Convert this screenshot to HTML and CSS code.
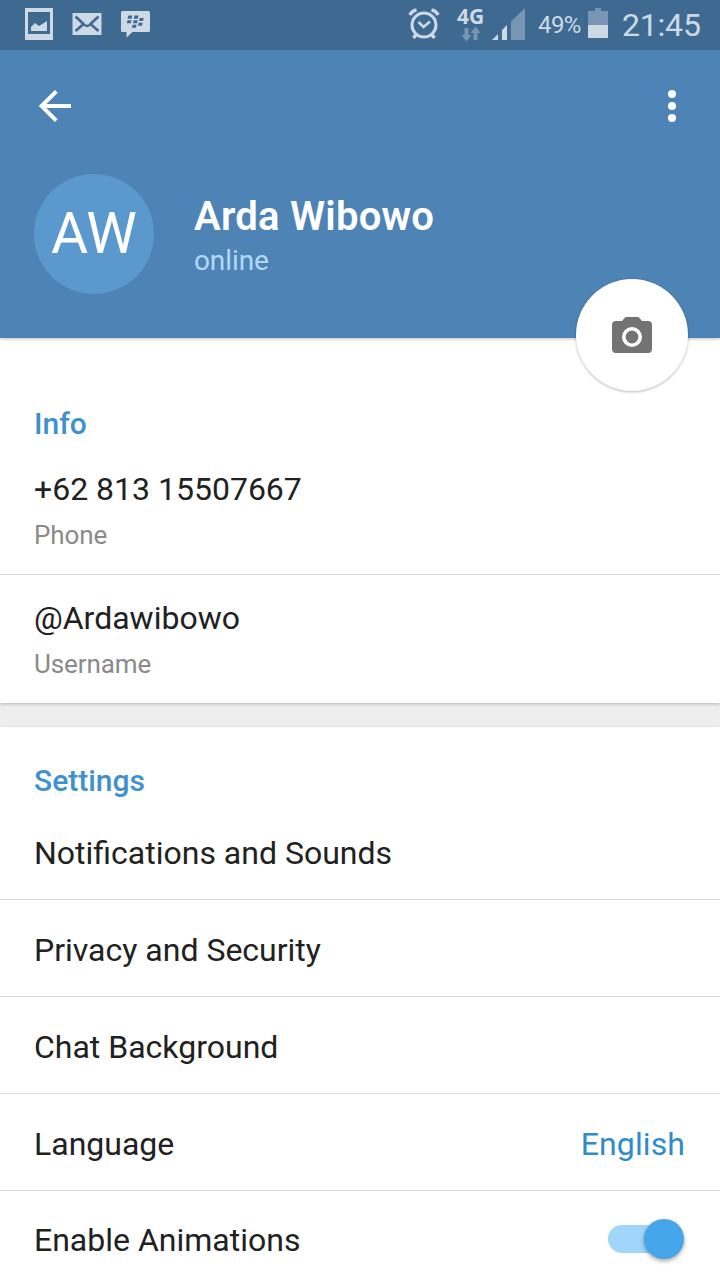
FILE: index.html
```
<!DOCTYPE html>
<html lang="en">
<head>
  <meta charset="UTF-8">
  <meta name="viewport" content="width=device-width, initial-scale=1.0">
  <title>Settings</title>
  <link rel="stylesheet" href="styles.css">
</head>
<body>
  <div class="status-bar">
    <svg class="status-left" width="130" height="50" viewBox="24 0 130 50">
      <path fill="#cdd9e4" fill-rule="evenodd" d="M25 8h28v32H25zM28 12v22h22V12z"/>
      <path fill="#cdd9e4" d="M31 31v-4l4-4 4 3 8-5v10z"/>
      <path fill="#cdd9e4" d="M72.500 13h29v22h-29z"/>
      <path fill="none" stroke="#3e6a92" stroke-width="2.6" d="M75.500 16.500l8 7.500q3.500 4 7 0l8-7.500M75.500 31l7.500-6.500M98.500 31l-7.500-6.500"/>
      <path fill="#cdd9e4" d="M122.500 11h26q1.500 0 1.500 1.500v18q0 1.500-1.500 1.500h-16l-6 5.500V32h-4q-1.500 0-1.500-1.500v-18q0-1.500 1.500-1.500z"/>
      <path fill="#3e6a92" d="M128.300 15.500h4l-.7 3.200h-4zM134.500 15.500h4l-.7 3.200h-4zM127.500 20.300h4l-.7 3h-4zM133.700 20.300h4l-.7 3h-4zM139.700 18h4l-.7 3h-4zM138.700 22.700h4l-.7 3h-4zM132.600 24.800h4l-.7 3h-4z"/>
    </svg>
    <div class="status-right">
      <svg width="34" height="50" viewBox="407 0 34 50" fill="none" stroke="#cdd9e4">
        <circle cx="424" cy="25" r="12" stroke-width="3"/>
        <path stroke-width="2.600" d="M418.500 22l5 5 6.500-5.500"/>
        <path stroke-width="3.600" d="M410 15q1.500-4 6.500-5M438 15q-1.500-4-6.500-5"/>
        <path stroke-width="3.600" d="M416.500 34l-3 4M431.500 34l3 4"/>
      </svg>
      <div class="network">
        <span>4G</span>
        <svg width="20" height="16" viewBox="461 26 20 16" fill="#7896b3">
          <path d="M464.500 28h4v7h3l-5 6.500-5-6.500h3zM473.500 40h4v-7h3l-5-6.500-5 6.500h3z"/>
        </svg>
      </div>
      <svg class="signal" width="34" height="50" viewBox="492 0 34 50">
        <path fill="#cdd9e4" d="M492 40l6-6v6zM502 30l5-5v15h-5z"/>
        <path fill="#7896b3" d="M511 21.500L525 8v32h-14z"/>
      </svg>
      <span class="percent">49%</span>
      <svg class="battery" width="20" height="50" viewBox="588 0 20 50">
        <path fill="#7896b3" d="M588 11h7V8h6v3h7v14h-20z"/>
        <path fill="#cdd9e4" d="M588 25h20v13h-20z"/>
      </svg>
      <span class="clock">21:45</span>
    </div>
  </div>

  <header class="header">
    <div class="toolbar">
      <svg width="34" height="34" viewBox="38 89 34 34">
        <path fill="none" stroke="#fff" stroke-width="4" d="M71 106H42M56.300 91.300L41.600 106l14.700 14.700"/>
      </svg>
      <svg width="8" height="32" viewBox="0 0 8 32" fill="#fff">
        <circle cx="4" cy="4" r="4"/>
        <circle cx="4" cy="16" r="4"/>
        <circle cx="4" cy="28" r="4"/>
      </svg>
    </div>
    <div class="profile">
      <div class="avatar"><span>AW</span></div>
      <div>
        <div class="name">Arda Wibowo</div>
        <div class="online">online</div>
      </div>
    </div>
    <!-- floating photo button over the header edge -->
    <div class="camera-button">
      <svg width="40" height="36" viewBox="0 0 40 36">
        <path fill="#737373" d="M13.500 0h13L30 4h6q4 0 4 4v24q0 4-4 4H4q-4 0-4-4V8q0-4 4-4h6z"/>
        <circle cx="20" cy="20" r="8.200" fill="none" stroke="#fff" stroke-width="3.600"/>
      </svg>
    </div>
  </header>

  <section class="card info">
    <h2>Info</h2>
    <div class="detail">
      <div class="value">+62 813 15507667</div>
      <div class="label">Phone</div>
    </div>
    <div class="detail">
      <div class="value">@Ardawibowo</div>
      <div class="label">Username</div>
    </div>
  </section>

  <section class="card settings">
    <h2>Settings</h2>
    <div class="row"><span>Notifications and Sounds</span></div>
    <div class="row"><span>Privacy and Security</span></div>
    <div class="row"><span>Chat Background</span></div>
    <div class="row"><span>Language</span><span class="row-value">English</span></div>
    <div class="row toggle"><span>Enable Animations</span><div class="switch"><div class="thumb"></div></div></div>
  </section>
</body>
</html>
```
FILE: styles.css
```
* {
  box-sizing: border-box;
}

body {
  margin: 0;
  height: 1280px;
  overflow: hidden;
  font-family: Roboto, sans-serif;
  background-color: #eee;
  color: #212121;
}

svg {
  display: block;
  flex: none;
}

.status-bar {
  position: relative;
  z-index: 2;
  display: flex;
  justify-content: space-between;
  height: 50px;
  padding: 0 19px 0 24px;
  background-color: #3e6a92;
  color: #cdd9e4;
}

.status-right {
  display: flex;
  line-height: 50px;
  white-space: nowrap;
}

.network {
  width: 28px;
  margin-left: 16px;
  padding-top: 6px;
  font-family: "Open Sans", sans-serif;
  font-size: 21px;
  font-weight: bold;
  line-height: 20px;
}

.network svg {
  margin-left: 4px;
}

.signal {
  margin-left: 7px;
}

.percent {
  width: 44px;
  margin-left: 12px;
  font-size: 24px;
  letter-spacing: -0.6px;
}

.battery {
  margin-left: 6px;
}

.clock {
  width: 79px;
  margin-left: 14px;
  font-size: 32px;
  letter-spacing: -0.2px;
}

.header {
  position: relative;
  z-index: 1;
  height: 288px;
  background-color: #4d84b5;
  box-shadow: 0 1px 3px rgba(0, 0, 0, 0.25);
}

.toolbar {
  display: flex;
  align-items: center;
  justify-content: space-between;
  height: 112px;
  padding: 0 44px 0 38px;
}

.profile {
  display: flex;
  gap: 40px;
  padding: 12px 34px 0;
}

.avatar {
  width: 120px;
  height: 120px;
  border-radius: 50%;
  background-color: #5b98ce;
  color: #fff;
  font-size: 57px;
  line-height: 119px;
  text-align: center;
}

.name {
  padding-top: 19px;
  font-size: 40px;
  font-weight: 600;
  line-height: 48px;
  letter-spacing: 0.25px;
  color: #fff;
}

.online {
  padding-top: 4px;
  font-size: 28px;
  line-height: 32px;
  letter-spacing: -0.1px;
  color: #b3d9f8;
}

.camera-button {
  position: absolute;
  right: 32px;
  bottom: -53px;
  display: flex;
  align-items: center;
  justify-content: center;
  width: 112px;
  height: 112px;
  border-radius: 50%;
  background-color: #fff;
  box-shadow: 0 1px 3px rgba(0, 0, 0, 0.28);
}

.card {
  background-color: #fff;
}

.info {
  box-shadow: 0 1px 3px rgba(0, 0, 0, 0.25);
}

.settings {
  margin-top: 24px;
  box-shadow: 0 0 2px rgba(0, 0, 0, 0.12);
}

h2 {
  margin: 0;
  padding: 66px 34px 2px;
  font-size: 30px;
  font-weight: 500;
  line-height: 40px;
  color: #3e90cf;
}

.settings h2 {
  padding-top: 34px;
}

.detail {
  height: 128px;
  padding: 23px 34px 0;
}

.detail + .detail {
  height: 129px;
  border-top: 1px solid #d9d9d9;
}

.value {
  font-size: 32px;
  line-height: 40px;
}

.label {
  margin-top: 11px;
  font-size: 26px;
  line-height: 30px;
  letter-spacing: -0.1px;
  color: #8a8a8a;
}

.row {
  display: flex;
  align-items: center;
  justify-content: space-between;
  height: 97px;
  padding: 0 34px;
  border-bottom: 1px solid #d9d9d9;
  font-size: 32px;
}

.row span {
  padding-top: 4px;
}

.toggle span {
  padding-top: 2px;
}

.row .row-value {
  margin-right: 1px;
  letter-spacing: 0.1px;
  color: #2f8cc9;
}

.switch {
  display: flex;
  align-items: center;
  justify-content: flex-end;
  width: 76px;
  height: 28px;
  margin-right: 2px;
  border-radius: 14px;
  background: linear-gradient(to right, #a0d6fa 60px, transparent 60px);
}

.thumb {
  flex: none;
  width: 40px;
  height: 40px;
  border-radius: 50%;
  background-color: #45a7ea;
  box-shadow: 0 2px 4px rgba(0, 0, 0, 0.35);
}
```
